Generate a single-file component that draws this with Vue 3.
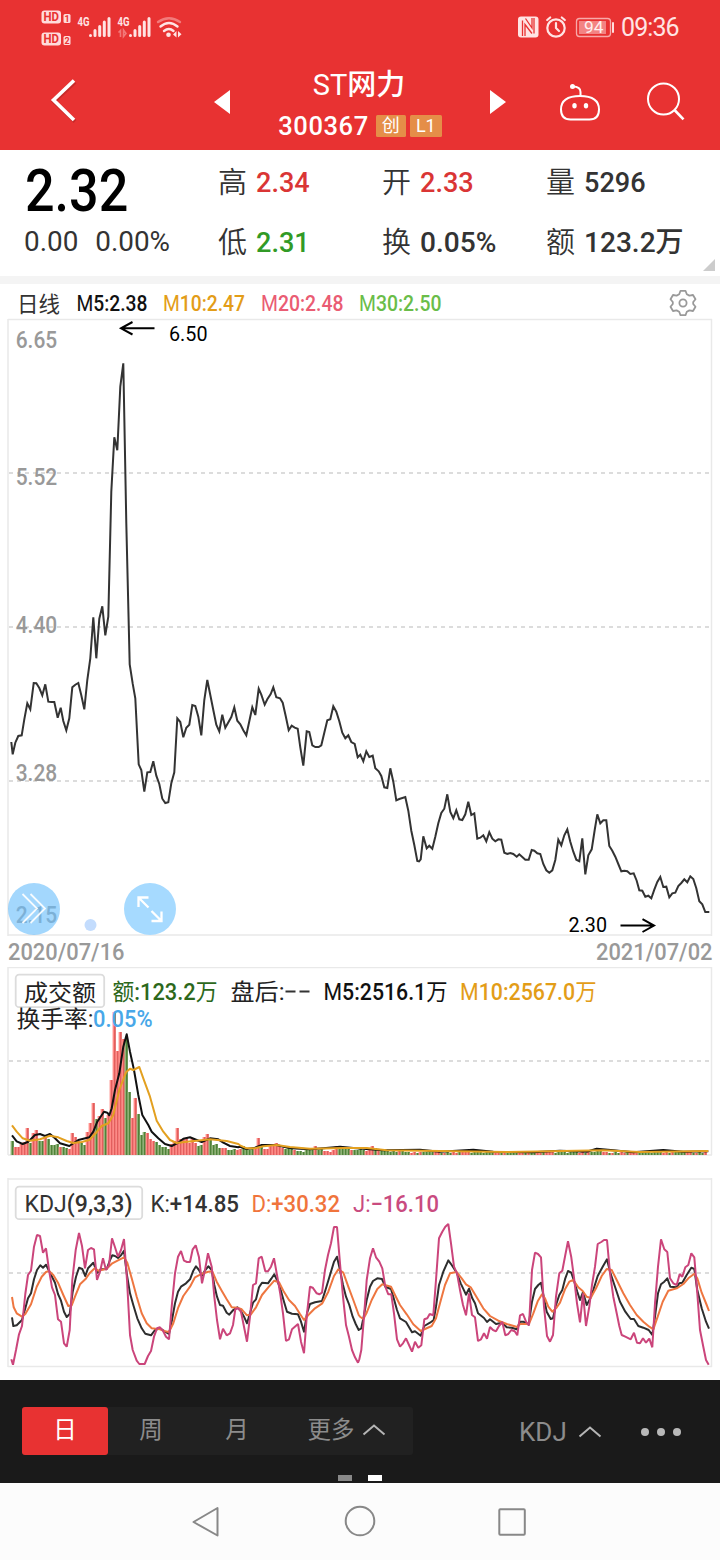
<script setup>
// Traces are digitised at three units per pixel, relative to an origin in pixels.
const trace = (...parts) =>
  parts
    .flatMap(([ox, oy, s]) =>
      s.trim().split(/\s+/).map((p) => {
        const [x, y] = p.split(',').map(Number)
        return (ox + x / 3).toFixed(1) + ',' + (oy + y / 3).toFixed(1)
      })
    )
    .join(' ')

const price = trace(
  [0, 350, `34,1176 38,1213 46,1178 55,1158 65,1156 73,1108 82,1060 91,1078 101,999 109,1000 118,1014 127,1036 136,1003 145,1055 154,1056 163,1056 173,1103 182,1073 190,1113 199,1141 208,1105 217,1012 226,1004 235,999 244,1036 253,1078 262,990 271,925 280,802 289,925 298,806 307,769 316,856 325,800 334,425 343,262 352,301 361,110 370,40 379,520 389,943 398,1001 406,1045 416,1243 424,1260 433,1325 442,1267 451,1266 460,1234 469,1277 478,1302 487,1346 496,1359 505,1357 514,1300 523,1267 532,1105 541,1116 550,1162 559,1133 568,1124 577,1065 586,1068 595,1100`],
  [200, 660, `4,226 13,120 22,60 31,105 40,150 49,194 58,214 67,164 76,203 94,171 103,142 112,182 121,193 130,211 139,226 148,184 157,142 166,165 176,86 184,104 194,134 202,118 212,102 220,82 229,112 240,115 248,128 257,168 266,211 275,197 284,203 293,206 301,262 310,317 320,214 328,216 337,256 346,261 356,261 364,256 373,218 382,181 391,178 400,139 409,155 418,184 427,218 436,235 445,226 454,246 464,252 473,292 481,284 490,304 499,274 508,291 518,287 526,325 536,334 544,348 553,382 562,384 571,325 580,365 589,421 598,417 616,411 625,452 634,512 643,555 652,603 657,604 662,598 670,529 680,565 688,557 697,566 706,530 715,490 724,459 733,446 742,403 751,456 760,475 769,451 778,478 787,480 796,463`],
  [460, 760, `25,125 34,165 43,160 52,236 61,233 70,226 79,244 88,217 97,236 106,244 115,238 124,239 133,278 142,282 151,279 160,282 170,290 178,283 187,291 196,299 206,299 215,270 223,272 232,280 241,282 250,312 259,331 268,338 277,331 286,300 295,239 304,256 313,226 322,208 331,245 340,275 349,299 358,304 367,235 376,343 385,286 395,268 404,210 412,163 421,190 430,181 439,181 448,258 457,272 466,290 475,312 484,334 493,332 502,334 511,342 521,340 530,362 538,391 547,392 556,410 565,407 574,415 583,389 592,366 601,351 610,381 619,380 628,412 637,400 646,398 655,378 664,369 673,358 682,367 691,349 700,357 709,385 718,424 727,433 736,456 748,456`]
)

const volMa5 = trace(
  [0, 860, `36,826 50,844 68,852 85,845 105,825 120,822 135,828 150,822 165,835 180,850 208,858 235,840 268,832 280,815 292,785 312,755 322,758 328,766 335,745 345,690 358,640 370,560 380,523 390,575 402,630 415,705 427,765 445,795 455,815 475,835 495,852 515,858 535,848 550,836 570,832 590,840 605,846 630,835 655,838 670,848 690,858 715,862`],
  [240, 965, `0,545 20,552 45,548 65,540 90,540 110,540 130,545 155,550 210,553 250,550 300,545 340,549 380,552 430,556 540,554 600,560 700,554 760,560 880,562 960,557 1040,560 1070,551 1120,556 1180,562 1270,555 1330,560 1405,559`]
)
const volMa10 = trace(
  [0, 860, `36,796 50,815 68,835 90,842 120,838 150,827 175,832 200,843 220,849 245,846 268,840 285,822 305,798 325,790 340,765 358,690 378,637 390,626 400,630 418,621 430,655 450,710 470,782 490,815 510,840 530,849 560,845 590,842 630,838 680,843 715,852`],
  [240, 965, `0,541 20,550 45,550 70,544 110,540 150,546 210,551 310,549 380,549 440,556 600,558 800,561 1090,556 1200,561 1405,558`]
)

const headBars = `14g 8r 8r 11r 13r 27r 12g 22r 25r 14g 14g 17r 16g 10g 10g 11g 8r 8g 7g 6r 22r 18r 14r 12g 10g 23r 32r 52r 36g 39r 46r 37g 40r 75r 143r 104r 123r 116r 116g 63g 37r 57r 41g 20g 23g 22r 16r 14r 13g 10g 8g 8g 6g 11r 14r 27r 16r 16r 17r 12r 17r 12r 9g 10g 18r 21r 17g 10g 11g 7g 7r 7r 5g 5g 6g 5r 6r 9g 6g 5g 6g 7r 17r 9g 6r 6r 9r 10r 12r 9r 7r 6g 8g 8g 5r 4g 4g 3g 6g 7g 7g 9r 5g 6g 4r 4r 3r 5r 9r 7g 6g 7g 7g 5r 5g 5g 6g 5g 4r 6r 9r 7g 5r 4g 4g 4g 3g 4g 3g 4r`
const tail = '4g 3g 3g 2r 3r 2g 3r 3g 3g 4g 4g 3r 3r 2g 2r 3g 2g 3r 2r 3g 3r 4r 3r 2g 3g 3g 3g 2g'.split(' ')
const bars = headBars.split(' ')
while (bars.length < 232) bars.push(tail[(bars.length - 18) % tail.length])
const volume = bars.map((b, i) => ({ x: 10.6 + i * 3, h: parseInt(b), up: b.endsWith('r') }))

const kdjJ = trace(
  [0, 1170, `34,568 39,584 48,540 57,493 66,468 76,372 84,315 93,302 102,230 111,195 120,198 129,248 138,235 147,300 156,352 165,375 174,448 183,455 192,520 200,530 209,480 217,330 227,240 237,189 246,228 255,295 264,240 273,234 282,238 291,330 300,305 309,265 318,300 327,285 336,205 345,232 354,260 363,240 372,207 381,330 390,495 398,540 410,572 418,582 434,582 444,558 453,543 462,500 471,475 480,472 489,482 498,500 507,508 516,400 525,310 534,260 543,243 552,272 561,276 570,276 578,238 587,226 597,262 606,340 615,300 624,250 635,290 643,380 651,450 660,508 669,476 680,496 690,490 699,465 706,418 715,415 723,425 732,470 741,515 750,440 759,345 768,340 776,265 785,260 796,304 804,304 813,290 822,265 832,320 841,372 849,430 858,513 867,508 876,478 894,462 903,515 912,550 921,430 930,350 938,353 950,370 958,373 966,368 975,300 984,255 993,220 1002,171 1011,171 1020,280 1029,380 1038,465 1047,500 1056,540 1065,562 1074,578`],
  [360, 1170, `-2,568 4,540 12,440 20,330 30,265 39,235 48,262 58,275 67,295 76,350 85,373 94,373 102,430 111,508 120,530 129,520 138,505 147,525 156,545 165,515 175,533 184,526 193,448 202,445 209,432 220,436 228,330 237,205 247,185 256,170 265,162 273,220 282,290 291,310 300,360 309,405 318,436 327,370 336,435 345,442 354,513 363,508 372,490 381,506 390,471 399,480 408,484 417,468 427,456 436,496 445,492 454,480 464,484 472,496 480,436 489,432 498,455 507,466 516,300 525,248 534,252 543,262 552,410 561,498 570,515 579,495 588,380 598,310 607,302 616,255 624,214 634,262 643,330 651,400 660,457 669,370 678,468 688,410 696,345 705,290 713,222 724,216 732,210 741,210 750,310 760,380 770,430 778,468 785,495 796,500 812,508 822,488 831,518 840,520 849,505 858,518 868,506 877,532 885,400 894,290 903,208 913,238 922,246 930,325 940,340 950,345 959,312 967,320 976,292 985,285 994,250 1003,262 1012,370 1020,480 1030,530 1038,570 1046,584`]
)
const kdjK = trace(
  [0, 1170, `36,442 40,468 50,466 66,450 76,415 84,385 93,370 102,328 111,300 121,286 129,293 138,284 147,302 156,320 165,338 174,372 183,392 192,425 200,441 209,432 218,365 228,320 237,293 247,297 256,318 264,295 280,278 292,308 302,298 320,297 330,270 337,256 345,258 354,264 363,256 372,242 380,310 390,370 400,405 412,445 425,475 436,491 453,496 465,480 480,475 495,485 507,492 516,450 525,400 534,365 543,350 558,340 570,328 580,302 588,289 597,300 606,317 616,300 625,289 635,300 643,345 651,380 660,405 669,407 680,428 688,434 700,420 712,412 722,422 732,440 741,460 750,430 759,398 768,388 777,352 786,338 804,340 814,326 823,313 833,335 842,360 852,395 861,425 876,431 894,433 903,455 912,485 921,430 930,402 945,397 966,393 978,355 990,315 1002,275 1011,260 1020,300 1029,345 1038,380 1048,405 1058,440 1067,462 1076,480`],
  [360, 1170, `4,475 12,435 20,390 30,350 39,333 52,325 66,327 76,350 93,357 102,388 111,420 120,445 138,456 156,487 165,484 182,497 193,468 210,458 221,450 228,410 237,345 250,305 265,271 275,285 290,308 302,340 318,374 327,356 337,385 345,400 354,430 372,444 381,456 390,448 408,462 427,458 440,472 455,473 470,478 480,455 490,455 506,464 516,395 525,357 535,345 543,338 552,385 560,425 572,447 579,445 588,405 598,375 607,360 616,325 624,303 634,308 643,335 652,365 660,390 669,366 680,405 690,387 700,360 713,318 728,290 741,268 750,305 765,350 780,395 796,425 812,447 822,447 835,468 850,473 866,480 877,495 885,440 894,370 903,343 913,335 922,325 931,350 950,352 958,340 967,338 980,315 994,293 1003,297 1012,360 1025,415 1038,455 1047,476`]
)
const kdjD = trace(
  [0, 1170, `36,381 41,412 50,430 66,440 76,432 93,403 110,350 125,320 138,306 147,303 160,315 174,338 190,375 205,408 215,406 225,380 240,343 256,328 270,308 285,294 295,302 320,296 337,280 354,271 372,262 382,278 395,325 410,380 425,430 440,460 455,475 480,478 495,484 507,486 520,460 535,412 550,378 570,350 585,322 606,311 625,305 637,304 650,335 665,362 680,388 695,412 712,413 725,418 741,436 752,434 768,412 786,375 805,352 823,332 837,337 850,362 867,390 885,408 900,432 912,450 925,435 945,415 967,400 985,365 1002,318 1015,298 1030,308 1045,350 1060,390 1076,435`],
  [360, 1170, `0,440 10,447 20,428 35,390 52,357 67,343 93,350 105,375 120,405 140,433 160,463 182,483 195,477 215,468 228,445 240,400 255,345 270,310 290,306 305,325 318,343 332,352 350,382 370,415 390,438 415,452 440,462 472,471 480,462 507,462 520,430 533,394 546,373 555,385 565,410 577,425 588,415 600,398 615,358 628,335 640,330 655,352 668,363 680,380 692,384 708,355 725,318 740,297 755,300 770,330 790,370 810,405 830,435 850,455 868,470 880,478 893,440 908,395 925,362 950,355 970,342 985,325 1003,311 1012,325 1025,368 1040,405 1047,423`]
)

const quotes = [
  { k: '高', v: '2.34', c: 'up' },
  { k: '开', v: '2.33', c: 'up' },
  { k: '量', v: '5296', c: '' },
  { k: '低', v: '2.31', c: 'down' },
  { k: '换', v: '0.05%', c: 'wide' },
  { k: '额', v: '123.2万', c: 'wide' }
]
const axis = [
  { t: '6.65', y: 347.7 },
  { t: '5.52', y: 484.5 },
  { t: '4.40', y: 632.7 },
  { t: '3.28', y: 780.7 },
  { t: '2.15', y: 922.7 }
]
</script>

<template>
  <div class="screen">
    <header class="top">
      <div class="status">
        <svg class="status-left" width="190" height="54" viewBox="0 0 190 54">
          <g fill="#ffdcdc">
            <rect x="41.5" y="10.5" width="19.5" height="13" rx="3" />
            <rect x="41.5" y="32.5" width="19.5" height="13" rx="3" />
            <rect x="63.5" y="14" width="7" height="9" rx="1.5" />
            <rect x="63.5" y="36" width="7" height="9" rx="1.5" />
          </g>
          <g class="tiny" fill="#e83232">
            <text x="43.5" y="21.3" font-size="12" textLength="15.5" lengthAdjust="spacingAndGlyphs">HD</text>
            <text x="43.5" y="43.3" font-size="12" textLength="15.5" lengthAdjust="spacingAndGlyphs">HD</text>
            <text x="64.4" y="21.7" font-size="9">1</text>
            <text x="64.4" y="43.7" font-size="9">2</text>
          </g>
          <g class="tiny" fill="#ffe4e4">
            <text x="77.5" y="25.7" font-size="12.5" textLength="12" lengthAdjust="spacingAndGlyphs">4G</text>
            <text x="117.5" y="25.7" font-size="12.5" textLength="12" lengthAdjust="spacingAndGlyphs">4G</text>
          </g>
          <g stroke="#ffe4e4" stroke-width="3" stroke-linecap="round">
            <path d="M90.5 35.5v0M95 30.5v5M99.7 26.5v9M104.3 22v13.5M109 18.5v17" />
            <path d="M130.5 35.5v0M135 30.5v5M139.7 26.5v9M144.3 22v13.5M149 18.5v17" />
          </g>
          <path d="M118.5 32.5l2-2v6.5M123.5 30v6.5l2.5-3z" fill="none" stroke="#f27878" stroke-width="1.6" />
          <g fill="none" stroke-linecap="round" stroke-width="2.4">
            <path d="M158 22q11-7.500 22 0" stroke="#f27b7b" />
            <path d="M160.500 26.500q8.500-7 17 0M164 31q5-4 9.500 0" stroke="#ffe4e4" />
          </g>
          <circle cx="168.500" cy="34.800" r="2.300" fill="#ffe4e4" />
          <path d="M173 34.500l3.500-3.500v6.500zM178 31v6.500l3.500-3.200z" fill="#ffe4e4" />
        </svg>
        <svg class="status-right" width="96" height="54" viewBox="516 0 96 54">
          <rect x="518" y="16.500" width="20.500" height="21" rx="3" fill="#ffe4e4" />
          <path d="M522.500 36V20.500M534 18v15.500M525 36V24.500l7 9M525.500 18.500l6.500 9.500V18" fill="none" stroke="#e83232" stroke-width="1.300" />
          <g fill="none" stroke="#ffe4e4" stroke-width="2.200" stroke-linecap="round" stroke-linejoin="round">
            <circle cx="556" cy="28" r="8.700" />
            <path d="M556 23v5l3 3M547.200 20l3-2.500M564.800 20l-3-2.500" />
          </g>
          <rect x="576.500" y="18.500" width="34" height="18" rx="3" fill="none" stroke="#f8a9a9" stroke-width="1.300" />
          <rect x="579" y="21" width="27" height="13" fill="#f38383" />
          <text x="584" y="33" font-size="16.500" textLength="19.500" lengthAdjust="spacingAndGlyphs" fill="#fff0f0" class="rb">94</text>
        </svg>
        <i class="battery-tip"></i>
        <span class="clock">09:36</span>
      </div>
      <div class="titlebar">
        <svg width="720" height="96" viewBox="0 54 720 96">
          <path d="M75 82L54 101.500L75 121.500" fill="none" stroke="#a82222" stroke-opacity=".5" stroke-width="4" />
          <path d="M74 80.500L53.500 100L74 120" fill="none" stroke="#fff" stroke-width="3.600" />
          <path d="M230 90v24l-16-12zM490 90v24l16-12z" fill="#fff" />
          <g fill="none" stroke="#fff" stroke-width="2">
            <path d="M580 96c-13 0-19 5-19 13.500c0 7.500 4 10 9.500 10h19c5.500 0 9.500-2.500 9.500-10c0-8.500-6-13.500-19-13.500z" />
            <path d="M580.500 96v-4c0-3.500-3-5.500-7.500-5.500" />
            <circle cx="663.500" cy="99" r="15.500" />
            <path d="M674.500 110l9 9.300" stroke-width="2.600" />
          </g>
          <circle cx="572.500" cy="86.500" r="2.500" fill="#fff" />
          <ellipse cx="574.500" cy="105.800" rx="2.200" ry="2.700" fill="#fff" />
          <ellipse cx="586" cy="105.800" rx="2.200" ry="2.700" fill="#fff" />
        </svg>
        <div class="title">
          <div class="name">ST<b>网力</b></div>
          <div class="code"><b>300367</b><span class="tag cj">创</span><span class="tag l1">L1</span></div>
        </div>
      </div>
    </header>

    <section class="quote">
      <div class="last">
        <div class="big">2.32</div>
        <div class="chg"><span>0.00</span><span>0.00%</span></div>
      </div>
      <div class="grid">
        <div v-for="q in quotes" :key="q.k" class="cell">
          <span class="k">{{ q.k }}</span><span class="v" :class="q.c">{{ q.v }}</span>
        </div>
      </div>
      <i class="corner"></i>
    </section>

    <svg class="chart" width="720" height="683" viewBox="0 284 720 683">
      <g class="lg" font-size="21.500">
        <text class="lt" x="17" y="311.500" fill="#333" textLength="43" lengthAdjust="spacingAndGlyphs">日线</text>
        <text x="76.500" y="311" fill="#111" textLength="71" lengthAdjust="spacingAndGlyphs"><tspan class="lt">M</tspan>5:2.38</text>
        <text x="163" y="311" fill="#e39d18" textLength="82" lengthAdjust="spacingAndGlyphs"><tspan class="lt">M</tspan>10:2.47</text>
        <text x="261" y="311" fill="#ea5c73" textLength="82.500" lengthAdjust="spacingAndGlyphs"><tspan class="lt">M</tspan>20:2.48</text>
        <text x="359" y="311" fill="#6abd49" textLength="82.500" lengthAdjust="spacingAndGlyphs"><tspan class="lt">M</tspan>30:2.50</text>
      </g>
      <g fill="none" stroke="#999" stroke-width="1.800" stroke-linejoin="round">
        <path d="M680.500 290.800h5l1.300 3.400l2.600 1.400l3.600-.6l2.500 4.200l-2.300 2.800v2l2.300 2.800l-2.500 4.200l-3.600-.6l-2.600 1.400l-1.300 3.400h-5l-1.300-3.400l-2.600-1.400l-3.600.6l-2.500-4.200l2.300-2.800v-2l-2.300-2.800l2.500-4.200l3.600.6l2.600-1.400z" />
        <circle cx="683" cy="303" r="3.600" />
      </g>
      <path d="M8 319.500H712M8 935H712" stroke="#e9e9e9" stroke-width="1.500" />
      <path d="M8 319V936M711.500 319V936" stroke="#e9e9e9" stroke-width="1.500" />
      <path class="dash" d="M9 473H709M9 627H709M9 781H709" />
      <text v-for="a in axis" :key="a.t" class="ax" x="15.700" :y="a.y" textLength="41.500" lengthAdjust="spacingAndGlyphs">{{ a.t }}</text>
      <polyline :points="price" fill="none" stroke="#333" stroke-width="2" />
      <g fill="none" stroke="#000" stroke-width="2">
        <path d="M154.500 328.300H121M132.500 322L121 328.300L132.500 334.500" />
        <path d="M620.500 925.500H654M642.500 919.200L654 925.500L642.500 932" />
      </g>
      <text class="rb" x="169" y="340.500" font-size="20.500" textLength="38.500" lengthAdjust="spacingAndGlyphs">6.50</text>
      <text class="rb" x="568.500" y="932" font-size="20.500" textLength="38.500" lengthAdjust="spacingAndGlyphs">2.30</text>
      <circle cx="34" cy="909" r="26" fill="#6bbffc" fill-opacity=".62" />
      <circle cx="150" cy="909" r="26" fill="#a6daff" />
      <circle cx="90.500" cy="925" r="6" fill="#c3dcfd" />
      <g fill="none" stroke="#fff" stroke-width="1.800">
        <path d="M22.500 894L37 908.500L22.500 923M30.500 894L45 908.500L30.500 923" stroke-opacity=".9" />
        <path d="M138.500 907v-9.500h10M139 898l9.500 9.500M161.500 911.500v9.500h-10M161 920.500l-9.500-9.500" stroke-width="2.300" />
      </g>
      <text class="ax" x="8" y="959.500" textLength="116.500" lengthAdjust="spacingAndGlyphs">2020/07/16</text>
      <text class="ax" x="596" y="959.500" textLength="116.500" lengthAdjust="spacingAndGlyphs">2021/07/02</text>
    </svg>

    <svg class="chart" width="720" height="203" viewBox="0 967 720 203">
      <path d="M8 967.500H712M8 1155H712M8 967V1155M711.500 967V1155" stroke="#e9e9e9" stroke-width="1.500" />
      <path class="dash" d="M9 1061H709" />
      <g v-for="(b, i) in volume" :key="i">
        <rect :x="b.x" :y="1155 - b.h" width="3" :height="b.h" :fill="b.up ? '#ff8a86' : '#8fb276'" />
        <rect :x="b.x + 1.7" :y="1155 - b.h" width="1.300" :height="b.h" :fill="b.up ? '#d84c4c' : '#347020'" />
      </g>
      <polyline :points="volMa5" fill="none" stroke="#111" stroke-width="2" stroke-linejoin="round" />
      <polyline :points="volMa10" fill="none" stroke="#e3a020" stroke-width="2" stroke-linejoin="round" />
      <rect class="pill" x="15.700" y="974.700" width="88.500" height="32.500" rx="3.500" />
      <g class="lg" font-size="23">
        <text class="lt" x="24" y="1000.500" fill="#222" textLength="72" lengthAdjust="spacingAndGlyphs">成交额</text>
        <text x="112.500" y="1000" fill="#2c681b" textLength="105" lengthAdjust="spacingAndGlyphs"><tspan class="lt">额</tspan>:123.2<tspan class="lt">万</tspan></text>
        <text class="lt" x="230.500" y="1000" fill="#222" textLength="54" lengthAdjust="spacingAndGlyphs">盘后:</text>
        <path d="M285.500 991.500h10M299.500 991.500h10" stroke="#333" stroke-width="1.800" />
        <text x="323.500" y="1000" fill="#111" textLength="124" lengthAdjust="spacingAndGlyphs"><tspan class="lt">M</tspan>5:2516.1<tspan class="lt">万</tspan></text>
        <text x="460" y="1000" fill="#e39d18" textLength="136.500" lengthAdjust="spacingAndGlyphs"><tspan class="lt">M</tspan>10:2567.0<tspan class="lt">万</tspan></text>
        <text class="lt" x="16.500" y="1027" fill="#222" textLength="77" lengthAdjust="spacingAndGlyphs">换手率:</text>
        <text x="93" y="1027" fill="#48a7e8" textLength="59.500" lengthAdjust="spacingAndGlyphs">0.05%</text>
      </g>
    </svg>

    <svg class="chart" width="720" height="210" viewBox="0 1170 720 210">
      <path d="M8 1179H712M8 1366.500H712M8 1178V1367M711.500 1178V1367" stroke="#e9e9e9" stroke-width="1.500" />
      <path class="dash" d="M9 1273H709" />
      <polyline :points="kdjK" fill="none" stroke="#2e2e2e" stroke-width="2" stroke-linejoin="round" />
      <polyline :points="kdjD" fill="none" stroke="#ee7640" stroke-width="2" stroke-linejoin="round" />
      <polyline :points="kdjJ" fill="none" stroke="#cb457b" stroke-width="2" stroke-linejoin="bevel" />
      <rect class="pill" x="15.700" y="1186.700" width="126.500" height="32.500" rx="3.500" />
      <g class="lg" font-size="23.500">
        <text x="24.500" y="1212" fill="#333" textLength="108" lengthAdjust="spacingAndGlyphs"><tspan class="lt">KDJ</tspan>(9,3,3)</text>
        <text x="150.500" y="1212" fill="#333" textLength="88.500" lengthAdjust="spacingAndGlyphs"><tspan class="lt">K:</tspan>+14.85</text>
        <text x="251.500" y="1212" fill="#f0743c" textLength="88.500" lengthAdjust="spacingAndGlyphs"><tspan class="lt">D:</tspan>+30.32</text>
        <text x="353" y="1212" fill="#c94b7f" textLength="86" lengthAdjust="spacingAndGlyphs"><tspan class="lt">J:</tspan>−16.10</text>
      </g>
    </svg>

    <div class="toolbar">
      <div class="tabs">
        <span class="tab on">日</span><span class="tab">周</span><span class="tab">月</span>
        <span class="tab more">更多
          <svg width="24" height="14" viewBox="0 0 24 14"><path d="M1.500 11.500L12 2.500L22.500 11.500" fill="none" stroke="#b5b5b5" stroke-width="2" /></svg>
        </span>
      </div>
      <div class="ind">
        <span>KDJ</span>
        <svg width="24" height="14" viewBox="0 0 24 14"><path d="M1.500 11.500L12 2.500L22.500 11.500" fill="none" stroke="#b5b5b5" stroke-width="2" /></svg>
      </div>
      <div class="dots"><i></i><i></i><i></i></div>
      <div class="pager"><i></i><i class="cur"></i></div>
    </div>

    <nav class="nav">
      <svg width="720" height="77" viewBox="0 1483 720 77">
        <g fill="none" stroke="#888" stroke-width="2" stroke-linejoin="round">
          <path d="M217.500 1508v27.500L193.500 1522z" />
          <circle cx="360" cy="1521" r="14.300" />
          <rect x="499.300" y="1509.300" width="25.500" height="25.500" rx="1" />
        </g>
      </svg>
    </nav>
  </div>
</template>

<style>
body {
  margin: 0;
  background: #fff;
}
</style>

<style scoped>
.screen {
  width: 720px;
  height: 1560px;
  display: flex;
  flex-direction: column;
  overflow: hidden;
  background: #fff;
  font-family: Roboto, "Noto Sans CJK SC", sans-serif;
}
svg {
  display: block;
  flex: none;
}
i {
  display: block;
}
.top {
  height: 150px;
  background: #e83232;
  color: #fff;
}
.status {
  height: 54px;
  display: flex;
  align-items: flex-start;
}
.status-right {
  margin-left: 326px;
}
.battery-tip {
  width: 2px;
  height: 11px;
  margin: 22px 0 0 0;
  background: #ffdede;
  border-radius: 1px;
}
.clock {
  margin: 13px 0 0 7px;
  font-size: 25px;
  line-height: 30px;
  letter-spacing: -0.9px;
  color: #ffe4e4;
}
.tiny {
  font-weight: 700;
}
.rb {
  font-family: Roboto, sans-serif;
}
.titlebar {
  display: grid;
  height: 96px;
}
.titlebar > * {
  grid-area: 1 / 1;
}
.title {
  display: flex;
  flex-direction: column;
  align-items: center;
}
.name {
  margin: 12px 2px 0 0;
  height: 38px;
  line-height: 38px;
  font-size: 29px;
}
.name b {
  font-weight: 500;
}
.code {
  display: flex;
  align-items: center;
  height: 44px;
}
.code b {
  font-size: 25.500px;
  font-weight: 500;
  letter-spacing: 0.600px;
  margin-right: 7px;
}
.tag {
  height: 22px;
  line-height: 22px;
  background: #e58e48;
  border-radius: 1.500px;
  text-align: center;
  font-size: 18px;
}
.cj {
  width: 30px;
  margin-right: 4px;
}
.l1 {
  width: 32px;
}
.quote {
  height: 126px;
  border-bottom: 8px solid #f4f4f4;
  display: flex;
  position: relative;
}
.last {
  width: 218px;
}
.big {
  margin: 11px 0 0 25px;
  height: 60px;
  line-height: 60px;
  font-size: 60px;
  font-weight: 500;
  color: #000;
  transform: scaleX(0.868);
  transform-origin: 0 0;
}
.chg {
  display: flex;
  gap: 17px;
  margin: 5px 0 0 24px;
  font-size: 28px;
  line-height: 32px;
  color: #333;
  transform: scaleX(0.995);
  transform-origin: 0 0;
}
.grid {
  display: grid;
  grid-template-columns: 164px 164px 170px;
  grid-template-rows: 60px 60px;
  margin-top: 3px;
}
.cell {
  display: flex;
  align-items: center;
  height: 60px;
  white-space: nowrap;
}
.k {
  width: 38px;
  font-size: 29px;
  line-height: 40px;
  font-weight: 350;
  color: #333;
}
.v {
  font-size: 28.500px;
  line-height: 40px;
  font-weight: 500;
  color: #333;
  transform: scaleX(0.95);
  transform-origin: 0 50%;
}
.wide {
  transform: scaleX(0.985);
}
.up {
  color: #da3535;
}
.down {
  color: #319a26;
}
.corner {
  position: absolute;
  right: 5px;
  bottom: 5px;
  border-left: 12px solid transparent;
  border-bottom: 12px solid #ccc;
}
.lg {
  font-weight: 500;
}
.lg text {
  font-family: Roboto, "Noto Sans CJK SC", sans-serif;
}
.lt {
  font-weight: 400;
}
.ax {
  font-size: 23px;
  font-weight: 500;
  fill: #999;
}
.dash {
  stroke: #dcdcdc;
  stroke-width: 2;
  stroke-dasharray: 4 4;
}
.pill {
  fill: #fff;
  stroke: #dcdcdc;
  stroke-width: 1.800;
}
.toolbar {
  height: 103px;
  background: #1a1a1a;
  position: relative;
  display: flex;
  align-items: center;
  color: #8c8c8c;
  font-size: 23.500px;
}
.tabs {
  display: flex;
  width: 391px;
  height: 48px;
  margin: 0 0 1px 22px;
  background: #212121;
  border-radius: 3px;
}
.tab {
  width: 86px;
  display: flex;
  align-items: center;
  justify-content: center;
  line-height: 44px;
  padding-bottom: 3px;
  box-sizing: border-box;
}
.on {
  background: #e83232;
  color: #fff;
  border-radius: 3px;
}
.more {
  width: 133px;
  gap: 7px;
}
.ind {
  display: flex;
  align-items: center;
  gap: 11px;
  margin-left: 106px;
  font-size: 26px;
}
.dots {
  display: flex;
  gap: 8px;
  margin-left: 39px;
}
.dots i {
  width: 8px;
  height: 8px;
  border-radius: 50%;
  background: #b8b8b8;
}
.pager {
  position: absolute;
  left: 338px;
  bottom: 2px;
  display: flex;
  gap: 16px;
}
.pager i {
  width: 14px;
  height: 6px;
  background: #888;
}
.pager .cur {
  background: #fff;
}
.nav {
  height: 77px;
  background: #fcfcfc;
}
</style>
